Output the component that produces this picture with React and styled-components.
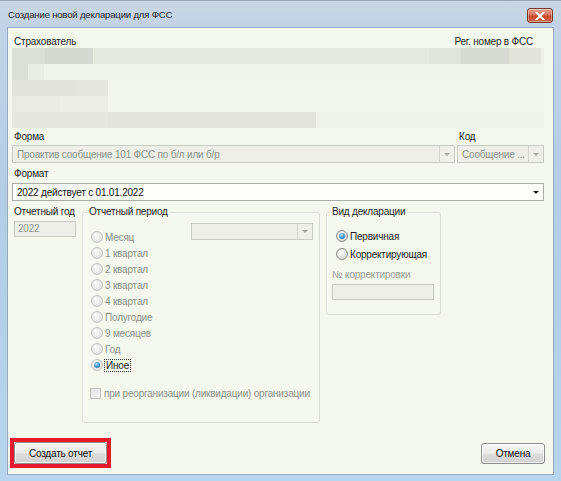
import styled, { createGlobalStyle, css } from "styled-components";

const GlobalStyle = createGlobalStyle`
  html, body {
    margin: 0;
    padding: 0;
    background: #ffffff;
  }
  * {
    box-sizing: border-box;
  }
  body {
    font-family: "Liberation Sans", Arial, sans-serif;
    font-size: 10px;
    letter-spacing: -0.2px;
    color: #1f1f1f;
  }
`;

// пикселизованный блок с данными страхователя
const blurRows = [
  [
    { w: 33, c: "#dcded8" },
    { w: 48, c: "#d6d8d2" },
    { w: 336, c: "#e6e9e0" },
    { w: 32, c: "#e2e5dc" },
    { w: 48, c: "#d8dad4" },
    { w: 32, c: "#e2e4dc" },
    { w: 3, c: "#eaeee4" },
  ],
  [
    { w: 16, c: "#dcded8" },
    { w: 16, c: "#eaede4" },
    { w: 500, c: "#f1f4eb" },
  ],
  [
    { w: 64, c: "#e2e4dc" },
    { w: 32, c: "#e6e8e0" },
    { w: 436, c: "#f3f6ed" },
  ],
  [
    { w: 48, c: "#eaece4" },
    { w: 48, c: "#edefe7" },
    { w: 436, c: "#f4f7ee" },
  ],
  [
    { w: 96, c: "#e6e8e0" },
    { w: 208, c: "#e3e5dd" },
    { w: 228, c: "#eff2e9" },
  ],
];

const periods = [
  "1 квартал",
  "2 квартал",
  "3 квартал",
  "4 квартал",
  "Полугодие",
  "9 месяцев",
  "Год",
];

export default function App() {
  return (
    <>
      <GlobalStyle />
      <Window>
        <TitleBar>
          <TitleText>Создание новой декларации для ФСС</TitleText>
          <CloseButton>
            <svg width="10" height="8" viewBox="0 0 10 8">
              <path
                d="M1.5 0.5 L8.5 7.5 M8.5 0.5 L1.5 7.5"
                stroke="#ffffff"
                strokeWidth="2"
                strokeLinecap="square"
              />
            </svg>
          </CloseButton>
        </TitleBar>

        <Client>
          <HeaderRow>
            <span>Страхователь</span>
            <span>Рег. номер в ФСС</span>
          </HeaderRow>

          <Blur>
            {blurRows.map((row, i) => (
              <BlurRow key={i}>
                {row.map((seg, j) => (
                  <BlurCell key={j} $w={seg.w} $c={seg.c} />
                ))}
              </BlurRow>
            ))}
          </Blur>

          <FormRow>
            <FieldColumn $w={443}>
              <FieldLabel>Форма</FieldLabel>
              <Combo $disabled>
                <ComboText>Проактив сообщение 101 ФСС по б/л или б/р</ComboText>
                <ComboArrow $disabled $separator>
                  <Triangle $disabled />
                </ComboArrow>
              </Combo>
            </FieldColumn>
            <FieldColumn>
              <FieldLabel>Код</FieldLabel>
              <Combo $disabled>
                <ComboText>Сообщение ...</ComboText>
                <ComboArrow $disabled $separator>
                  <Triangle $disabled />
                </ComboArrow>
              </Combo>
            </FieldColumn>
          </FormRow>

          <FieldLabel $top={4}>Формат</FieldLabel>
          <Combo $top={2}>
            <ComboText>2022 действует с 01.01.2022</ComboText>
            <ComboArrow>
              <Triangle />
            </ComboArrow>
          </Combo>

          <Lower>
            <YearColumn>
              <FieldLabel $pad={0}>Отчетный год</FieldLabel>
              <TextBox $w={62}>2022</TextBox>
            </YearColumn>

            <Group $w={238}>
              <Legend $indent={4}>Отчетный период</Legend>
              <PeriodBody>
                <MonthRow>
                  <RadioRow $disabled>
                    <Radio $disabled />
                    Месяц
                  </RadioRow>
                  <Combo $disabled $w={122} $h={17} $top={-6}>
                    <ComboText />
                    <ComboArrow $disabled $separator>
                      <Triangle $disabled />
                    </ComboArrow>
                  </Combo>
                </MonthRow>
                {periods.map((p) => (
                  <RadioRow key={p} $disabled>
                    <Radio $disabled />
                    {p}
                  </RadioRow>
                ))}
                <RadioRow $disabled>
                  <Radio $disabled $checked />
                  <Focused>Иное</Focused>
                </RadioRow>
                <CheckRow>
                  <CheckBox />
                  при реорганизации (ликвидации) организации
                </CheckRow>
              </PeriodBody>
            </Group>

            <Group $w={115}>
              <Legend $indent={3}>Вид декларации</Legend>
              <DeclBody>
                <RadioRow $h={18} $pad={4}>
                  <Radio $checked />
                  Первичная
                </RadioRow>
                <RadioRow $h={18} $pad={4}>
                  <Radio />
                  Корректирующая
                </RadioRow>
                <FieldLabel $top={5} $muted $pad={0}>
                  № корректировки
                </FieldLabel>
                <TextBox $w={102} />
              </DeclBody>
            </Group>
          </Lower>

          <Footer>
            <Highlight>
              <Button $w={93} $h={22}>
                Создать отчет
              </Button>
            </Highlight>
            <Button $w={64} $h={21}>
              Отмена
            </Button>
          </Footer>
        </Client>
      </Window>
    </>
  );
}

const Window = styled.div`
  width: 561px;
  height: 481px;
  display: flex;
  flex-direction: column;
  background: linear-gradient(
    180deg,
    #c9d6e4 0px,
    #c2d3e6 27px,
    #b3cde6 200px,
    #b7d5ee 100%
  );
  border-top: 1px solid #98a6b4;
`;

const TitleBar = styled.div`
  height: 26px;
  flex: none;
  display: flex;
  align-items: center;
  justify-content: space-between;
  padding: 0 8px 0 8px;
`;

const TitleText = styled.div`
  font-size: 9.6px;
  color: #1b2530;
  padding-top: 1px;
`;

const CloseButton = styled.div`
  width: 26px;
  height: 15px;
  margin-top: 3px;
  border: 1px solid #7a3a30;
  border-radius: 3px;
  background: linear-gradient(180deg, #e6a493 0%, #d4735d 45%, #c2462a 55%, #d16a4c 100%);
  display: flex;
  align-items: center;
  justify-content: center;
  box-shadow: inset 0 0 0 1px rgba(255, 255, 255, 0.35);
`;

const Client = styled.div`
  flex: 1;
  margin: 0 7px 6px 7px;
  border: 1px solid #95aac0;
  background: #f5f8ee;
  padding: 6px 9px 6px 4px;
  display: flex;
  flex-direction: column;
`;

const HeaderRow = styled.div`
  height: 14px;
  display: flex;
  align-items: center;
  justify-content: space-between;
  padding: 0 11px 0 2px;
`;

const Blur = styled.div`
  height: 80px;
  display: flex;
  flex-direction: column;
`;

const BlurRow = styled.div`
  height: 16px;
  display: flex;
`;

const BlurCell = styled.div`
  width: ${({ $w }) => $w}px;
  flex: none;
  background: ${({ $c }) => $c};
`;

const FormRow = styled.div`
  display: flex;
  gap: 2px;
  margin-top: 2px;
`;

const FieldColumn = styled.div`
  display: flex;
  flex-direction: column;
  ${({ $w }) =>
    $w
      ? css`
          width: ${$w}px;
          flex: none;
        `
      : css`
          flex: 1;
          min-width: 0;
        `}
`;

const FieldLabel = styled.div`
  height: 14px;
  line-height: 14px;
  margin-top: ${({ $top }) => $top || 0}px;
  padding-left: ${({ $pad }) => ($pad === undefined ? 2 : $pad)}px;
  color: ${({ $muted }) => ($muted ? "#9a9d98" : "#1f1f1f")};
  white-space: nowrap;
`;

const Combo = styled.div`
  height: ${({ $h }) => $h || 18}px;
  margin-top: ${({ $top }) => ($top === undefined ? 1 : $top)}px;
  ${({ $w }) => $w && `width: ${$w}px; flex: none;`}
  display: flex;
  align-items: center;
  border: 1px solid ${({ $disabled }) => ($disabled ? "#c9ccc4" : "#abaea7")};
  background: ${({ $disabled }) => ($disabled ? "#edefe8" : "#fdfdfb")};
  color: ${({ $disabled }) => ($disabled ? "#8e918c" : "#111111")};
`;

const ComboText = styled.div`
  flex: 1;
  min-width: 0;
  padding-left: 4px;
  white-space: nowrap;
  overflow: hidden;
`;

const ComboArrow = styled.div`
  width: 15px;
  height: 100%;
  flex: none;
  display: flex;
  align-items: center;
  justify-content: center;
  ${({ $separator }) => $separator && "border-left: 1px solid #d3d5ce;"}
`;

const Triangle = styled.div`
  width: 0;
  height: 0;
  border-left: 3px solid transparent;
  border-right: 3px solid transparent;
  border-top: 3px solid ${({ $disabled }) => ($disabled ? "#a4a7a2" : "#1a1a1a")};
`;

const Lower = styled.div`
  display: flex;
  align-items: flex-start;
  margin-top: 4px;
  gap: 6px;
`;

const YearColumn = styled.div`
  width: 64px;
  flex: none;
  display: flex;
  flex-direction: column;
  padding-left: 2px;
`;

const TextBox = styled.div`
  width: ${({ $w }) => $w}px;
  height: 16px;
  margin-top: 2px;
  border: 1px solid #c9ccc4;
  background: #edefe8;
  color: #969995;
  padding-left: 3px;
  line-height: 14px;
`;

const Group = styled.fieldset`
  width: ${({ $w }) => $w}px;
  min-width: 0;
  flex: none;
  margin: 0;
  padding: 0;
  border: 1px solid #d9dcd3;
  border-radius: 3px;
  box-shadow: inset 1px 1px 0 #ffffff;
`;

const Legend = styled.legend`
  margin-left: ${({ $indent }) => $indent}px;
  padding: 0 2px;
  height: 14px;
  line-height: 14px;
  color: #1f1f1f;
`;

const PeriodBody = styled.div`
  padding: 10px 6px 21px 8px;
  display: flex;
  flex-direction: column;
`;

const DeclBody = styled.div`
  padding: 8px 0 14px 5px;
  display: flex;
  flex-direction: column;
`;

const MonthRow = styled.div`
  display: flex;
  align-items: flex-start;
  justify-content: space-between;
`;

const RadioRow = styled.div`
  height: ${({ $h }) => $h || 16}px;
  padding-left: ${({ $pad }) => $pad || 0}px;
  display: flex;
  align-items: center;
  gap: 2px;
  white-space: nowrap;
  color: ${({ $disabled }) => ($disabled ? "#8e918c" : "#1f1f1f")};
`;

const Radio = styled.span`
  position: relative;
  width: 12px;
  height: 12px;
  flex: none;
  border-radius: 50%;
  border: 1px solid ${({ $disabled }) => ($disabled ? "#c2c4c0" : "#8a8c88")};
  background: ${({ $disabled }) =>
    $disabled
      ? "radial-gradient(circle at 40% 35%, #fafafa 0%, #e4e5e2 70%)"
      : "radial-gradient(circle at 40% 35%, #ffffff 0%, #d9dad7 75%)"};
  ${({ $checked }) =>
    $checked &&
    css`
      &::after {
        content: "";
        position: absolute;
        left: 2px;
        top: 2px;
        width: 6px;
        height: 6px;
        border-radius: 50%;
        background: radial-gradient(circle at 40% 35%, #b9e6fb 0%, #3c95d6 50%, #1b5aa0 100%);
      }
    `}
`;

const Focused = styled.span`
  outline: 1px dotted #333333;
  outline-offset: 0px;
  color: #1f1f1f;
  padding: 0 1px;
`;

const CheckRow = styled.div`
  height: 16px;
  margin-top: 12px;
  margin-left: -1px;
  display: flex;
  align-items: center;
  gap: 3px;
  white-space: nowrap;
  color: #8e918c;
`;

const CheckBox = styled.span`
  width: 11px;
  height: 11px;
  flex: none;
  border: 1px solid #c2c4c0;
  background: linear-gradient(135deg, #e2e3e0 0%, #f4f4f2 100%);
`;

const Footer = styled.div`
  margin: auto -1px 0 -2px;
  display: flex;
  align-items: center;
  justify-content: space-between;
`;

const Highlight = styled.div`
  border: 4px solid #e8192c;
  padding: 0;
`;

const Button = styled.div`
  width: ${({ $w }) => $w}px;
  height: ${({ $h }) => $h}px;
  display: flex;
  align-items: center;
  justify-content: center;
  border: 1px solid #8e8f8f;
  border-radius: 3px;
  background: linear-gradient(180deg, #f4f4f4 0%, #ececec 48%, #dedede 52%, #d1d1d1 100%);
  box-shadow: inset 0 0 0 1px rgba(255, 255, 255, 0.7);
  color: #111111;
`;
